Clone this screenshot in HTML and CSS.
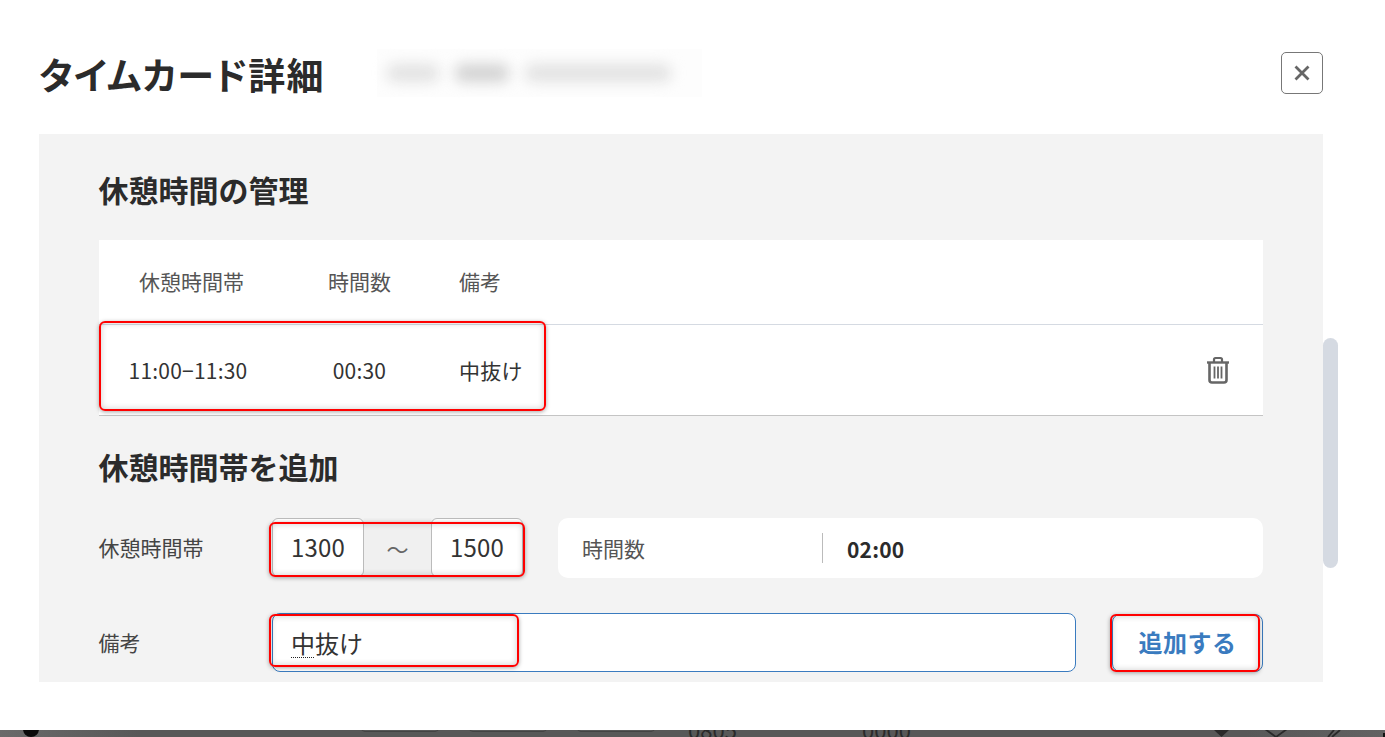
FILE: index.html
```html
<!DOCTYPE html>
<html lang="ja">
<head>
    <meta charset="UTF-8">
    <meta name="viewport" content="width=device-width, initial-scale=1.0">
    <title>タイムカード詳細</title>
    <link rel="stylesheet" href="styles.css">
</head>
<body>
    <div class="modal">
        <header class="modal-head">
            <h1 class="modal-title">タイムカード詳細</h1>
            <div class="blurred-name"><span class="blob blob-a"></span><span class="blob blob-b"></span><span class="blob blob-c"></span></div>
            <button class="close-button" aria-label="閉じる">
                <svg width="16" height="16" viewBox="0 0 16 16"><path d="M1.500 1.500 14.500 14.500M14.500 1.500 1.500 14.500" stroke="#666" stroke-width="2.800" fill="none"/></svg>
            </button>
        </header>

        <div class="modal-body">
            <div class="panel">
                <h2 class="section-title first">休憩時間の管理</h2>

                <div class="break-table">
                    <div class="table-head">
                        <span class="col-time">休憩時間帯</span>
                        <span class="col-hours">時間数</span>
                        <span class="col-note">備考</span>
                    </div>
                    <div class="table-row">
                        <span class="col-time">11:00−11:30</span>
                        <span class="col-hours">00:30</span>
                        <span class="col-note">中抜け</span>
                        <button class="trash-button" aria-label="削除">
                            <svg width="24" height="28" viewBox="0 0 24 28" fill="none" stroke="#666">
                                <path d="M1 6.500H23" stroke-width="2.400"/>
                                <path d="M8 6V3.500Q8 2 9.500 2H14.500Q16 2 16 3.500V6" stroke-width="2.200"/>
                                <path d="M3.500 7V24Q3.500 26.500 6 26.500H18Q20.500 26.500 20.500 24V7" stroke-width="2.600"/>
                                <path d="M8.500 10.500V22.500M12 10.500V22.500M15.500 10.500V22.500" stroke-width="1.800"/>
                            </svg>
                        </button>
                        <div class="mark mark-row"></div>
                    </div>
                </div>

                <h2 class="section-title second">休憩時間帯を追加</h2>

                <div class="form-row time-line">
                    <label class="form-label">休憩時間帯</label>
                    <div class="time-range">
                        <div class="time-box">1300</div>
                        <div class="time-sep">〜</div>
                        <div class="time-box">1500</div>
                        <div class="mark mark-time"></div>
                    </div>
                    <div class="hours-box">
                        <span class="hours-label">時間数</span>
                        <span class="hours-value">02:00</span>
                    </div>
                </div>

                <div class="form-row note-line">
                    <label class="form-label">備考</label>
                    <div class="note-input">
                        <span><span class="composing">中</span>抜け</span>
                        <div class="mark mark-note"></div>
                    </div>
                    <button class="add-button">追加する<div class="mark mark-add"></div></button>
                </div>
            </div>
            <div class="scroll-track"><div class="scroll-thumb"></div></div>
        </div>
    </div>

    <div class="behind">
        <span class="behind-dot"></span>
        <span class="behind-box box-a"></span>
        <span class="behind-box box-b"></span>
        <span class="behind-box box-c"></span>
        <span class="behind-num num-a">0805</span>
        <span class="behind-num num-b">0000</span>
        <svg class="behind-icons" width="171" height="7" viewBox="0 0 171 7" fill="none" stroke="#2a2a2a" stroke-width="1.800">
            <path d="M0 0H15L7.500 7Z" fill="#2a2a2a" stroke="none"/>
            <path d="M51 -1 62 7 73 -1"/>
            <path d="M114 7 120 0"/>
            <path d="M118 7 126 0"/>
            <path d="M169 7V3H171V7Z" fill="#111" stroke="none"/>
        </svg>
    </div>
</body>
</html>
```

FILE: styles.css
```css
* {
    box-sizing: border-box;
}

html, body {
    height: 100%;
}

body {
    margin: 0;
    overflow: hidden;
    display: flex;
    flex-direction: column;
    font-family: "Noto Sans CJK JP", "Noto Sans", sans-serif;
    color: #333;
    background-color: #5a5a5a;
}

.modal {
    height: 730px;
    flex-shrink: 0;
    display: flex;
    flex-direction: column;
    background-color: #fff;
    padding: 0 0 48px 39px;
}

.modal-head {
    height: 134px;
    flex-shrink: 0;
    display: flex;
    align-items: center;
    padding: 12px 62px 0 0;
}

.modal-title {
    margin: 2px 0 0;
    font-size: 37px;
    font-weight: 700;
    line-height: 1.2;
    letter-spacing: 1.1px;
    color: #2b2b2b;
    font-feature-settings: "palt";
}

.blurred-name {
    width: 325px;
    height: 48px;
    margin-left: 52px;
    display: flex;
    align-items: center;
    gap: 16px;
    padding-left: 10px;
    background-color: #fdfdfd;
}

.blob {
    height: 18px;
    border-radius: 8px;
    background-color: #e2e2e2;
    filter: blur(7px);
}

.blob-a {
    width: 52px;
}

.blob-b {
    width: 54px;
    background-color: #d2d2d2;
}

.blob-c {
    width: 146px;
}

.close-button {
    width: 42px;
    height: 42px;
    margin-left: auto;
    padding: 0;
    display: flex;
    align-items: center;
    justify-content: center;
    background-color: #fff;
    border: 1px solid #777;
    border-radius: 5px;
}

.modal-body {
    flex: 1;
    min-height: 0;
    display: flex;
}

.panel {
    width: 1284px;
    overflow: hidden;
    padding: 0 60px;
    background-color: #f3f3f3;
}

.section-title {
    margin: 0 0 0 -0.5px;
    font-size: 30px;
    font-weight: 700;
    line-height: 40px;
    color: #2b2b2b;
}

.section-title.first {
    padding: 35px 0 31px;
}

.section-title.second {
    padding: 30px 0 32px;
}

.scroll-track {
    width: 15px;
    padding-top: 204px;
}

.scroll-thumb {
    height: 230px;
    background-color: #d5dae2;
    border-radius: 8px;
}

.break-table {
    background-color: #fff;
    border-bottom: 1px solid #c4c4c4;
}

.table-head,
.table-row {
    display: grid;
    grid-template-columns: 185px 151px 1fr 96px;
    align-items: center;
    font-size: 21px;
    text-align: center;
}

.table-head {
    height: 85px;
    padding-bottom: 2px;
    color: #555;
    border-bottom: 1px solid #d5dae2;
}

.table-row {
    position: relative;
    height: 90px;
    color: #333;
    letter-spacing: 0.2px;
}

.table-row .col-time {
    padding-right: 7px;
}

.col-note {
    text-align: left;
    padding-left: 24px;
}

.trash-button {
    grid-column: 4;
    width: 24px;
    height: 28px;
    padding: 0;
    margin-left: 39px;
    border: none;
    background: none;
}

.form-row {
    display: flex;
    align-items: center;
}

.time-line {
    height: 60px;
}

.note-line {
    height: 59px;
    margin-top: 35px;
}

.form-label {
    width: 173px;
    flex-shrink: 0;
    margin-left: -0.5px;
    margin-right: 0.5px;
    padding-bottom: 2px;
    font-size: 21px;
    color: #444;
}

.time-range {
    position: relative;
    display: flex;
    width: 251px;
    height: 59px;
    flex-shrink: 0;
    align-self: flex-start;
}

.time-box {
    width: 92px;
    display: flex;
    align-items: center;
    justify-content: center;
    padding-bottom: 2px;
    font-size: 24px;
    letter-spacing: 0.2px;
    background-color: #fff;
    border: 1px solid #bbb;
    border-radius: 6px;
}

.time-sep {
    flex: 1;
    display: flex;
    align-items: center;
    justify-content: center;
    font-size: 22px;
    color: #666;
    background-color: #f0f0f0;
}

.hours-box {
    flex: 1;
    height: 60px;
    margin-left: 35px;
    display: flex;
    align-items: center;
    background-color: #fff;
    border-radius: 10px;
}

.hours-label {
    width: 265px;
    padding-left: 24px;
    font-size: 21px;
    color: #555;
    border-right: 1px solid #bbb;
    line-height: 30px;
}

.hours-value {
    padding: 2px 0 0 24px;
    font-size: 21px;
    font-weight: 700;
    letter-spacing: 0.2px;
    color: #2b2b2b;
}

.note-input {
    position: relative;
    width: 804px;
    height: 59px;
    flex-shrink: 0;
    display: flex;
    align-items: center;
    padding: 0 0 1px 18px;
    font-size: 24px;
    background-color: #fff;
    border: 1px solid #3a7bbf;
    border-radius: 8px;
}

.composing {
    text-decoration: underline dotted #222 1px;
    text-underline-offset: 4px;
}

.add-button {
    position: relative;
    width: 151px;
    height: 58px;
    margin-left: auto;
    padding: 0 0 2px;
    font-family: inherit;
    font-size: 24px;
    font-weight: 700;
    letter-spacing: 0.5px;
    color: #3a7bbf;
    background-color: #fff;
    border: 1px solid #3a7bbf;
    border-radius: 8px;
}

/* red marks drawn over the screenshot */
.mark {
    position: absolute;
    pointer-events: none;
    border: 2px solid #f00;
    border-radius: 6px;
    box-shadow: 0 1px 4px rgba(0, 0, 0, 0.35), inset 0 0 6px rgba(0, 0, 0, 0.2);
}

.mark-row {
    left: 0;
    top: -4px;
    width: 447px;
    height: 90px;
}

.mark-time {
    left: -3px;
    top: 4px;
    width: 256px;
    height: 55px;
}

.mark-note {
    left: -4px;
    top: 0;
    width: 250px;
    height: 53px;
}

.mark-add {
    left: -3px;
    top: -1px;
    width: 150px;
    height: 58px;
}

.behind {
    position: relative;
    flex: 1;
    overflow: hidden;
    background: linear-gradient(90deg, #6a6a6a, #585858 10%, #585858 90%, #626262);
}

.behind-dot {
    position: absolute;
    left: 23px;
    top: -9px;
    width: 16px;
    height: 16px;
    border-radius: 50%;
    background-color: #0a0a0a;
}

.behind-box {
    position: absolute;
    top: -20px;
    width: 78px;
    height: 22px;
    border: 1px solid #444;
    border-radius: 4px;
}

.box-a {
    left: 361px;
}

.box-b {
    left: 469px;
}

.box-c {
    left: 577px;
}

.behind-num {
    position: absolute;
    top: -13px;
    font-size: 22px;
    line-height: 24px;
    color: #2a2a2a;
}

.num-a {
    left: 688px;
}

.num-b {
    left: 862px;
}

.behind-icons {
    position: absolute;
    left: 1214px;
    top: 0;
}
```
